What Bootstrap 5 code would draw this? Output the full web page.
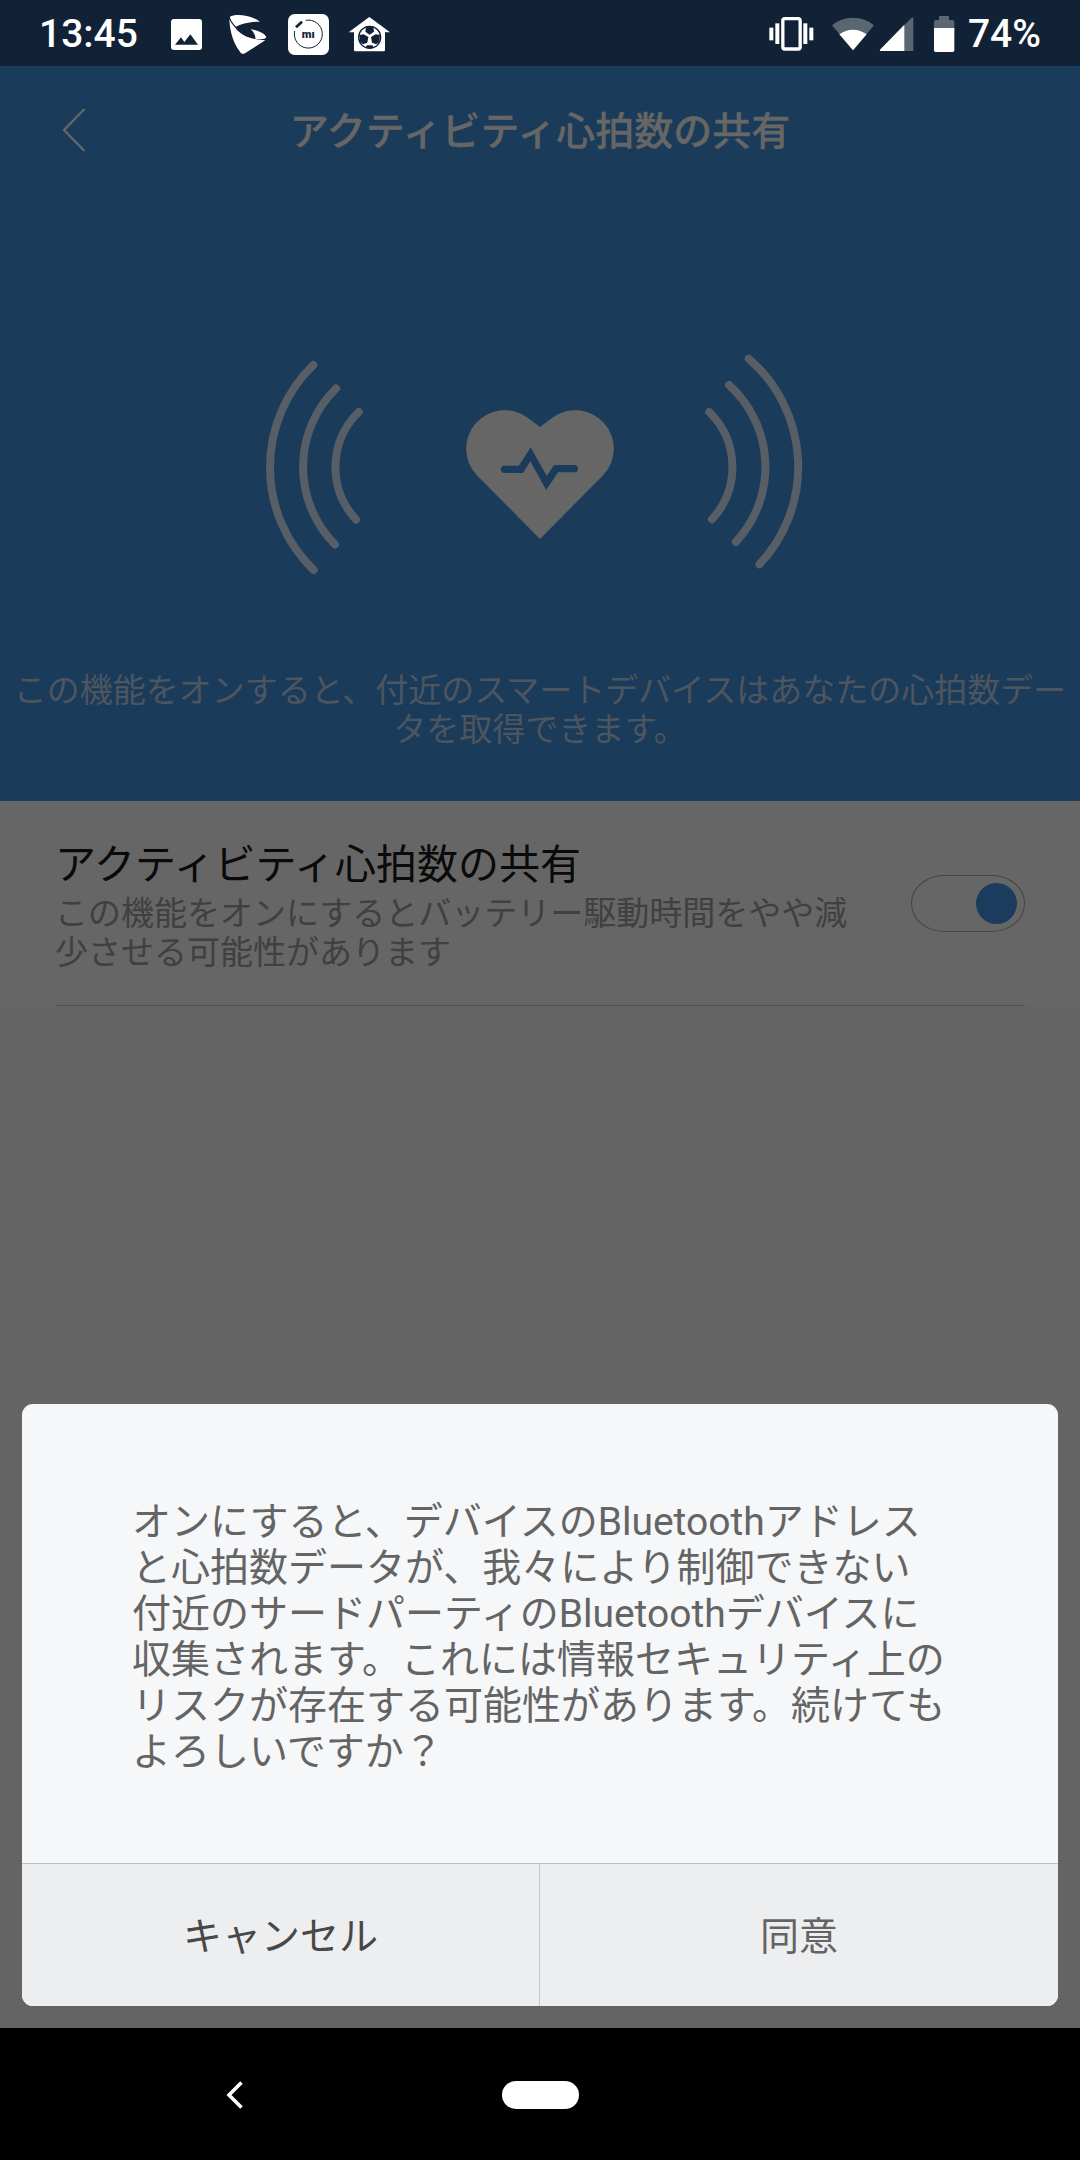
<!DOCTYPE html>
<html lang="ja">
<head>
<meta charset="utf-8">
<meta name="viewport" content="width=device-width, initial-scale=1">
<title>アクティビティ心拍数の共有</title>
<link href="https://cdn.jsdelivr.net/npm/bootstrap@5.3.0/dist/css/bootstrap.min.css" rel="stylesheet">
<style>
body { font-family: Roboto, "Noto Sans CJK JP", sans-serif; background: #000; }
svg { display: block; flex: none; overflow: visible; }
.screen { width: 1080px; height: 2160px; background: #646464; }
.statusbar { height: 66px; background: #112236; color: #fff; font-size: 39px; font-weight: 500; line-height: 66px; padding: 2px 39px 0 39px; }
.clock { width: 132px; }
.icon-swoosh { margin-left: 23px; }
.icon-band { margin-left: 21px; }
.icon-home { margin-left: 16px; }
.icon-wifi { margin-left: 18px; }
.icon-signal { margin-left: 6px; }
.icon-battery { margin: 0 13px 0 20px; }
.hero { height: 735px; background: #1b3b5a; color: #666; }
.hero-bar { height: 128px; padding: 0 62px; }
.hero-title { font-size: 39px; font-weight: 500; line-height: 56px; padding-top: 4px; -webkit-text-stroke: .3px #666; }
.hero-spacer { width: 24px; }
.hero-art { margin-top: 146px; }
.hero-text { margin-top: 81px; font-size: 33px; line-height: 39px; color: #4d555f; white-space: nowrap; }
.setting { height: 205px; background: #666; padding: 0 55px 0 56px; }
.setting-inner { border-bottom: 1px solid #505050; }
.setting-label { margin-left: -1px; }
.setting-name { font-size: 41px; line-height: 48px; color: #0a0a0a; margin-top: 40px; }
.setting-note { font-size: 33px; line-height: 39px; color: #404040; margin-top: 5px; }
.toggle { width: 114px; height: 57px; border: 1px solid #444; border-radius: 33px / 28px; padding-right: 7px; margin-top: 74px; }
.toggle-thumb { width: 41px; height: 41px; background: #1b3c5c; }
.sheet { left: 22px; right: 22px; top: 1404px; height: 602px; background: #f6f7f9; border-radius: 11px; }
.sheet-text { height: 459px; padding: 95px 0 0 110px; font-size: 39px; line-height: 46px; color: #646464; white-space: nowrap; }
.sheet-actions { height: 143px; border-top: 1px solid #bcbdbf; background: #edeef0; }
.sheet-btn { border: 0; border-radius: 0; font-size: 39px; color: #646464; padding: 4px 0 0; }
.sheet-btn:first-child { border-right: 1px solid #c6c7c9; color: #484848; }
.navbar-keys { height: 132px; background: #000; }
.key-back { margin: 1px 259px 0 -275px; }
.home-pill { width: 77px; height: 28px; background: #fff; margin-top: 1px; }
</style>
<script src="https://cdn.jsdelivr.net/npm/bootstrap@5.3.0/dist/js/bootstrap.bundle.min.js"></script>
</head>
<body class="m-0">
<div class="screen position-relative d-flex flex-column overflow-hidden">
  <header class="statusbar d-flex align-items-center justify-content-between">
    <div class="d-flex align-items-center">
      <span class="clock">13:45</span>
      <svg width="31" height="31" viewBox="513 54 93 93"><rect x="513" y="54" width="93" height="93" rx="9" fill="#fff"/><path d="M525 131L543 109L553 123L571 100L594 131Z" fill="#112236"/></svg>
      <svg class="icon-swoosh" width="42" height="41" viewBox="675 38 126 123" fill="#fff"><path d="M690 46C702 38 748 38 780 61C748 61 722 68 709 76C701 69 694 60 690 49Z"/><path d="M688 53C692 63 699 72 706 79C722 102 750 114 796 117L735 156Q728 160 722 154C703 130 690 98 688 53Z"/><path d="M752 83C775 88 797 98 799 108C797 114 780 115 766 112C767 100 760 92 752 83Z"/></svg>
      <svg class="icon-band" width="41" height="41" viewBox="864 39 123 123"><rect x="864" y="39" width="123" height="123" rx="20" fill="#fff"/><path d="M917 58A42 42 0 1 1 884 90" fill="none" stroke="#112236" stroke-width="3"/><path d="M888 79L906 62" stroke="#112236" stroke-width="8"/><text x="905" y="111" font-size="32" font-weight="900" textLength="39" lengthAdjust="spacingAndGlyphs" fill="#112236">mı</text></svg>
      <svg class="icon-home" width="49" height="35" viewBox="1035 48 147 105">
        <path d="M1108 48L1170 94H1155V147Q1155 151 1151 151H1066Q1062 151 1062 147V94H1046Z" fill="#fff"/>
        <circle cx="1109" cy="109" r="33" fill="none" stroke="#112236" stroke-width="4"/>
        <g fill="#112236"><path d="M1098 76H1120L1122 92L1109 101L1096 92Z"/><path d="M1078 102L1091 100L1105 108L1102 125L1089 130L1080 122Z"/><path d="M1140 102L1127 100L1113 108L1116 125L1129 130L1138 122Z"/><path d="M1101 133H1117L1123 141H1095Z"/></g>
      </svg>
    </div>
    <div class="d-flex align-items-center">
      <svg width="45" height="34" viewBox="89 48 135 102" fill="#fff"><rect x="130.500" y="53" width="52" height="91" rx="6" fill="none" stroke="#fff" stroke-width="10"/><rect x="108" y="67" width="12" height="62"/><rect x="90" y="80" width="12" height="38"/><rect x="192" y="67" width="12" height="62"/><rect x="210" y="80" width="12" height="38"/></svg>
      <svg class="icon-wifi" width="42" height="34" viewBox="278 46 126 102"><path d="M278 71Q304 48 341 48Q378 48 404 71L341 146Z" fill="#5a6672"/><path d="M300 98Q318 84 341 84Q364 84 382 98L341 146Z" fill="#fff"/></svg>
      <svg class="icon-signal" width="34" height="34" viewBox="422 49 102 102"><path d="M422 151V147L517 51Q522 49 522 53V151Z" fill="#5a6672"/><path d="M422 151V147L495 72V151Z" fill="#fff"/></svg>
      <svg class="icon-battery" width="21" height="36" viewBox="585 45 63 108"><path d="M600 45H630V57H641Q646 57 646 62V90H585V62Q585 57 590 57H600Z" fill="#5a6672"/><path d="M585 81H646V148Q646 153 641 153H590Q585 153 585 148Z" fill="#fff"/></svg>
      <span>74%</span>
    </div>
  </header>

  <section class="hero">
    <div class="hero-bar d-flex align-items-center justify-content-between">
      <svg width="24" height="44" viewBox="0 0 24 44" fill="none" stroke="#666" stroke-width="2.400"><path d="M22.500 1L2 22L22.500 43"/></svg>
      <h1 class="hero-title m-0">アクティビティ心拍数の共有</h1>
      <span class="hero-spacer"></span>
    </div>
    <svg class="hero-art mx-auto" width="580" height="250" viewBox="0 0 580 250">
      <g fill="none" stroke="#585e66" stroke-width="8" stroke-linecap="round">
        <path d="M63.300 25A142.500 142.500 0 0 0 63.700 230"/><path d="M86 48.500A110 110 0 0 0 85 204.500"/><path d="M108.700 72A77 77 0 0 0 106 179.500"/>
        <path d="M498.700 18.700A142.500 142.500 0 0 1 509.500 224.300"/><path d="M479 45A110 110 0 0 1 486 201.700"/><path d="M459.200 72A77 77 0 0 1 462 179.300"/>
      </g>
      <path d="M290 87L278 78A38.500 38.500 0 0 0 227.300 135.700L290 199L352.700 135.700A38.500 38.500 0 0 0 302 78Z" fill="#666"/>
      <path d="M254.500 129.300H271L280.500 114.300L296.500 143L306 128.700H324.300" fill="none" stroke="#1b3b5a" stroke-width="7.300" stroke-linecap="round" stroke-miterlimit="10"/>
    </svg>
    <p class="hero-text text-center mb-0">この機能をオンすると、付近のスマートデバイスはあなたの心拍数デー<br>タを取得できます。</p>
  </section>

  <section class="setting">
    <div class="setting-inner d-flex align-items-start justify-content-between h-100">
      <div class="setting-label">
        <div class="setting-name">アクティビティ心拍数の共有</div>
        <div class="setting-note">この機能をオンにするとバッテリー駆動時間をやや減<br>少させる可能性があります</div>
      </div>
      <div class="toggle d-flex align-items-center justify-content-end" role="switch" aria-checked="true"><span class="toggle-thumb rounded-circle"></span></div>
    </div>
  </section>

  <footer class="navbar-keys mt-auto d-flex align-items-center justify-content-center">
    <svg class="key-back" width="16" height="28" viewBox="0 0 16 28" fill="none" stroke="#fff" stroke-width="3.600"><path d="M14.500 1.500L2 14L14.500 26.500"/></svg>
    <span class="home-pill rounded-pill"></span>
  </footer>

  <div class="sheet position-absolute overflow-hidden" role="dialog">
    <div class="sheet-text">オンにすると、デバイスのBluetoothアドレス<br>と心拍数データが、我々により制御できない<br>付近のサードパーティのBluetoothデバイスに<br>収集されます。これには情報セキュリティ上の<br>リスクが存在する可能性があります。続けても<br>よろしいですか？</div>
    <div class="sheet-actions d-flex">
      <button class="sheet-btn btn w-50">キャンセル</button>
      <button class="sheet-btn btn w-50">同意</button>
    </div>
  </div>
</div>
</body>
</html>
